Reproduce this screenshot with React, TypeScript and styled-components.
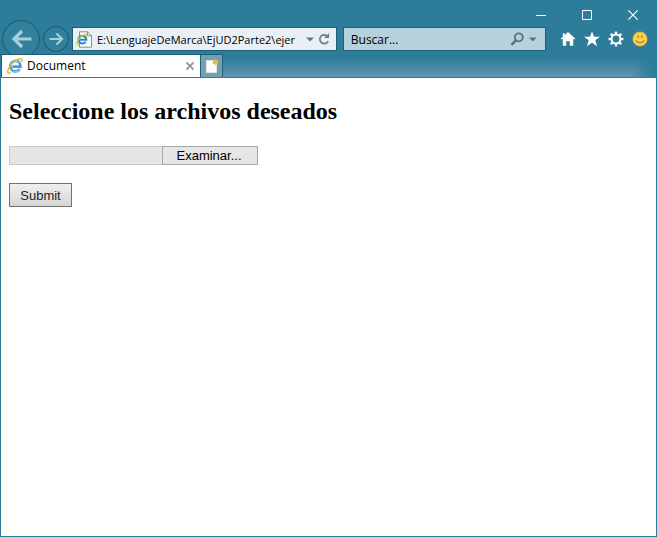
import React, { useState } from "react";
import styled, { createGlobalStyle } from "styled-components";

const accent = "#2d7d9a";
const accentDark = "#1f5f78";
const uiFont = `"Open Sans", "Noto Sans", sans-serif`;

const GlobalStyle = createGlobalStyle`
  *, *::before, *::after { box-sizing: border-box; }
  body { margin: 0; background: ${accent}; }
`;

const BrowserWindow = styled.div`
  display: flex;
  flex-direction: column;
  min-height: 100vh;
  background: ${accent};
  font: 12px/16px ${uiFont};
  color: #000;
`;

const TitleBar = styled.header`
  display: flex;
  justify-content: flex-end;
  height: 24px;
  padding: 6px 1px 0 0;
`;

const PlainButton = styled.button`
  display: flex;
  align-items: center;
  justify-content: center;
  flex: none;
  margin: 0;
  padding: 0;
  border: 0;
  background: none;
  font: inherit;
`;

const CaptionButton = styled(PlainButton)`
  width: 46px;
  height: 18px;
`;

const NavBar = styled.nav`
  display: flex;
  align-items: center;
  height: 30px;
  padding: 0 9px 0 2px;
`;

const RoundButton = styled(PlainButton)<{ $size: number }>`
  width: ${(p) => p.$size}px;
  height: ${(p) => p.$size}px;
  margin-right: 3px;
`;

const Field = styled.div<{ $share: number; $fill: string }>`
  display: flex;
  align-items: center;
  flex: ${(p) => p.$share} 1 0;
  min-width: 0;
  height: 24px;
  margin-right: 6px;
  padding: 0 4px 0 3px;
  border: 1px solid ${accentDark};
  background: ${(p) => p.$fill};
`;

const FieldInput = styled.input<{ $size: number }>`
  flex: 1;
  width: 0;
  min-width: 0;
  height: 20px;
  margin: 0 4px;
  padding: 0;
  border: 0;
  outline: 0;
  background: none;
  color: #000;
  font: inherit;
  font-size: ${(p) => p.$size}px;
  &::placeholder { color: #000; opacity: 1; }
`;

const Tools = styled.div`
  display: flex;
  gap: 8px;
  margin-left: 8px;
`;

const TabStrip = styled.div`
  position: relative;
  display: flex;
  height: 24px;
  padding: 0 5px 0 1px;
  border-bottom: 1px solid ${accent};
  background: ${accent};
`;

const StripGlow = styled.div`
  flex: 1;
  background: linear-gradient(to bottom, transparent 15%, rgba(150, 175, 195, 0.5));
  mask-image: linear-gradient(to left, transparent, #000 20px);
`;

const Tab = styled.div`
  display: flex;
  align-items: center;
  width: 200px;
  padding: 0 5px;
  border: solid ${accentDark};
  border-width: 1px 1px 0 1px;
  background: #fff;
`;

const TabTitle = styled.span`
  flex: 1;
  margin-left: 4px;
`;

const NewTab = styled(PlainButton)`
  width: 22px;
  border: solid ${accentDark};
  border-width: 1px 1px 0 0;
  background: #73a0b3;
`;

const Page = styled.main`
  flex: 1;
  margin: 0 1px 1px;
  padding: 19px 8px;
  background: #fff;
  font-family: "Liberation Serif", serif;
`;

const Heading = styled.h1`
  margin: 0 0 21px;
  font-size: 24px;
  line-height: 28px;
  font-weight: 700;
`;

const Form = styled.form`
  display: flex;
  flex-direction: column;
  align-items: flex-start;
  gap: 18px;
  font: 13px/17px "Liberation Sans", sans-serif;
`;

const FilePicker = styled.label`
  position: relative;
  display: flex;
  height: 19px;
`;

const FileInput = styled.input`
  position: absolute;
  inset: 0;
  width: 100%;
  opacity: 0;
`;

const FileName = styled.span`
  width: 153px;
  overflow: hidden;
  border: 1px solid #c8c8c8;
  border-right: 0;
  background: #e5e5e5;
  white-space: nowrap;
`;

const BrowseFace = styled.span`
  width: 96px;
  padding-right: 2px;
  border: 1px solid #a6a6a6;
  background: #e6e6e6;
  text-align: center;
`;

const SubmitButton = styled.button`
  width: 63px;
  height: 24px;
  padding: 0;
  border: 1px solid #707070;
  background: linear-gradient(#efefef, #d6d6d6);
  color: #222;
  font: inherit;
`;

const ExplorerLogo = () => (
  <svg width="16" height="16" viewBox="0 0 16 16" fill="none">
    <path d="M12.8 11A5.2 5.2 0 1 1 13.6 8.6H5.4" stroke="#3c9ddb" strokeWidth="2.7" />
    <path d="M12.6 11.4A5.4 5.4 0 0 1 3.4 11.1M3.6 6.2a5.2 5.2 0 0 1 8.8-.8" stroke="#7fd0f2" strokeWidth="1.1" />
    <path
      d="M3.8 14.7C1.8 15.8.3 15 .8 12.6 1.7 8.4 7 3 11.3 1.3 14.6 0 15.8 1.3 14.8 4"
      stroke="#edbc1c"
      strokeWidth="1.5"
    />
  </svg>
);

const PageLogo = () => (
  <svg width="17" height="17" viewBox="0 0 17 17" fill="none">
    <path d="M3.5.8h8l4 4v11.4h-12z" fill="#fbfbfb" stroke="#8b8b8b" />
    <path d="M11.5.8v4h4" stroke="#8b8b8b" />
    <path d="M9.6 10.9A3.9 3.9 0 1 1 10.3 8.8H4" stroke="#2387cc" strokeWidth="2.1" />
    <path d="M2.8 13.4C.9 14 .4 12.6 1.3 10.7 2.6 7.9 6.2 4.5 9 3.6c1.8-.3 2.4.6 2 2" stroke="#d5ca24" strokeWidth="1.4" />
  </svg>
);

const gearTeeth = [0, 45, 90, 135, 180, 225, 270, 315];

export default function App() {
  const [fileName, setFileName] = useState("");
  return (
    <>
      <GlobalStyle />
      <BrowserWindow>
        <TitleBar>
          <CaptionButton aria-label="Minimizar">
            <svg width="10" height="10" viewBox="0 0 10 10"><path d="M0 5.5h10" stroke="#fff" /></svg>
          </CaptionButton>
          <CaptionButton aria-label="Maximizar">
            <svg width="10" height="10" viewBox="0 0 10 10" fill="none"><path d="M.5.5h9v9h-9z" stroke="#fff" /></svg>
          </CaptionButton>
          <CaptionButton aria-label="Cerrar">
            <svg width="10" height="10" viewBox="0 0 10 10"><path d="M.3.3l9.4 9.4M9.7.3L.3 9.7" stroke="#fff" strokeWidth="1.1" /></svg>
          </CaptionButton>
        </TitleBar>

        <NavBar aria-label="Navegación">
          <RoundButton $size={38} aria-label="Atrás">
            <svg width="38" height="38" viewBox="0 0 38 38" fill="none">
              <circle cx="19" cy="19" r="18.3" fill="#31809c" stroke="#1f617b" strokeWidth="1.2" />
              <path d="M29.5 19H12M20 11l-8 8 8 8" stroke="#a9cddb" strokeWidth="3.2" />
            </svg>
          </RoundButton>
          <RoundButton $size={26} aria-label="Adelante">
            <svg width="26" height="26" viewBox="0 0 26 26" fill="none">
              <circle cx="13" cy="13" r="12.4" fill="#31809c" stroke="#1f617b" strokeWidth="1.2" />
              <path d="M6.5 13h12M13.5 7.5L19 13l-5.5 5.5" stroke="#a9cddb" strokeWidth="2.2" />
            </svg>
          </RoundButton>
          <Field $share={266} $fill="#e9f0f5">
            <PageLogo />
            <FieldInput $size={11} aria-label="Dirección" defaultValue="E:\LenguajeDeMarca\EjUD2Parte2\ejer" />
            <PlainButton aria-label="Mostrar direcciones">
              <svg width="8" height="5" viewBox="0 0 8 5"><path d="M0 .5h8L4 4.5z" fill="#65757f" /></svg>
            </PlainButton>
            <PlainButton aria-label="Actualizar">
              <svg width="18" height="14" viewBox="0 0 18 14" fill="none">
                <path d="M14.2 9.2A4.4 4.4 0 1 1 12.8 3.6" stroke="#6f7b82" strokeWidth="1.7" />
                <path d="M15 1v5h-5z" fill="#6f7b82" />
              </svg>
            </PlainButton>
          </Field>
          <Field $share={202} $fill="#b5d1dc">
            <FieldInput $size={12} aria-label="Buscar" placeholder="Buscar..." />
            <PlainButton aria-label="Iniciar búsqueda">
              <svg width="18" height="14" viewBox="0 0 18 14" fill="none">
                <circle cx="8.8" cy="5.3" r="4" stroke="#5d6f79" strokeWidth="1.8" />
                <path d="M6.1 8.2L1.5 12.8" stroke="#5d6f79" strokeWidth="2.4" />
              </svg>
            </PlainButton>
            <PlainButton aria-label="Opciones de búsqueda">
              <svg width="13" height="5" viewBox="0 0 13 5"><path d="M1 .5h7.5L4.75 4.5z" fill="#5d6f79" /></svg>
            </PlainButton>
          </Field>
          <Tools>
            <PlainButton aria-label="Inicio">
              <svg width="16" height="16" viewBox="0 0 16 16" fill="#fff">
                <path d="M8 .7l7.4 6.9-1.2 1.2-.8-.7V15H9.6v-4.5H6.4V15H2.6V8.1l-.8.7L.6 7.6l2-1.9V1.9h2.2v1.7z" stroke="#24647d" strokeWidth=".4" />
              </svg>
            </PlainButton>
            <PlainButton aria-label="Favoritos">
              <svg width="16" height="16" viewBox="0 0 16 16" fill="#fff">
                <path d="M8 .2l2.1 5.5H16l-4.7 3.6 1.8 6L8 11.8l-5.1 3.5 1.8-6L0 5.7h5.9z" />
              </svg>
            </PlainButton>
            <PlainButton aria-label="Herramientas">
              <svg width="16" height="16" viewBox="0 0 16 16" fill="none">
                <circle cx="8" cy="8" r="4.4" stroke="#fff" strokeWidth="2" />
                {gearTeeth.map((angle) => (
                  <path key={angle} d="M8 3.5V.6" stroke="#fff" strokeWidth="2.4" transform={`rotate(${angle} 8 8)`} />
                ))}
              </svg>
            </PlainButton>
            <PlainButton aria-label="Enviar comentarios">
              <svg width="16" height="16" viewBox="0 0 16 16" fill="none">
                <circle cx="8" cy="8" r="7.3" fill="#fbd24b" stroke="#a68b3c" strokeWidth=".6" />
                <path d="M6.2 4v3.2M9.8 4v3.2M4 9.4c1.4 3.2 6.6 3.2 8 0" stroke="#9a7824" strokeWidth="1.1" />
              </svg>
            </PlainButton>
          </Tools>
        </NavBar>

        <TabStrip>
          <Tab>
            <ExplorerLogo />
            <TabTitle>Document</TabTitle>
            <PlainButton aria-label="Cerrar pestaña">
              <svg width="10" height="10" viewBox="0 0 10 10"><path d="M1.5 1.5l7 7M8.5 1.5l-7 7" stroke="#9a9a9a" strokeWidth="1.9" /></svg>
            </PlainButton>
          </Tab>
          <NewTab aria-label="Nueva pestaña">
            <svg width="14" height="15" viewBox="0 0 14 15">
              <path d="M1.5 1.5h10v12h-10z" fill="#fff" stroke="#e3e3e3" />
              <path d="M10.3 0l1 1.6 2.2-.4-1 2 1 2-2.2-.4-1 2-1-2-2.1.4 1-2-1-2 2.1.4z" fill="#f2b63c" />
            </svg>
          </NewTab>
          <StripGlow />
        </TabStrip>

        <Page>
          <Heading>Seleccione los archivos deseados</Heading>
          <Form onSubmit={(e) => e.preventDefault()}>
            <FilePicker>
              <FileName>{fileName}</FileName>
              <BrowseFace>Examinar...</BrowseFace>
              <FileInput
                type="file"
                multiple
                onChange={(e) => setFileName(Array.from(e.target.files ?? []).map((f) => f.name).join(", "))}
              />
            </FilePicker>
            <SubmitButton type="submit">Submit</SubmitButton>
          </Form>
        </Page>
      </BrowserWindow>
    </>
  );
}
